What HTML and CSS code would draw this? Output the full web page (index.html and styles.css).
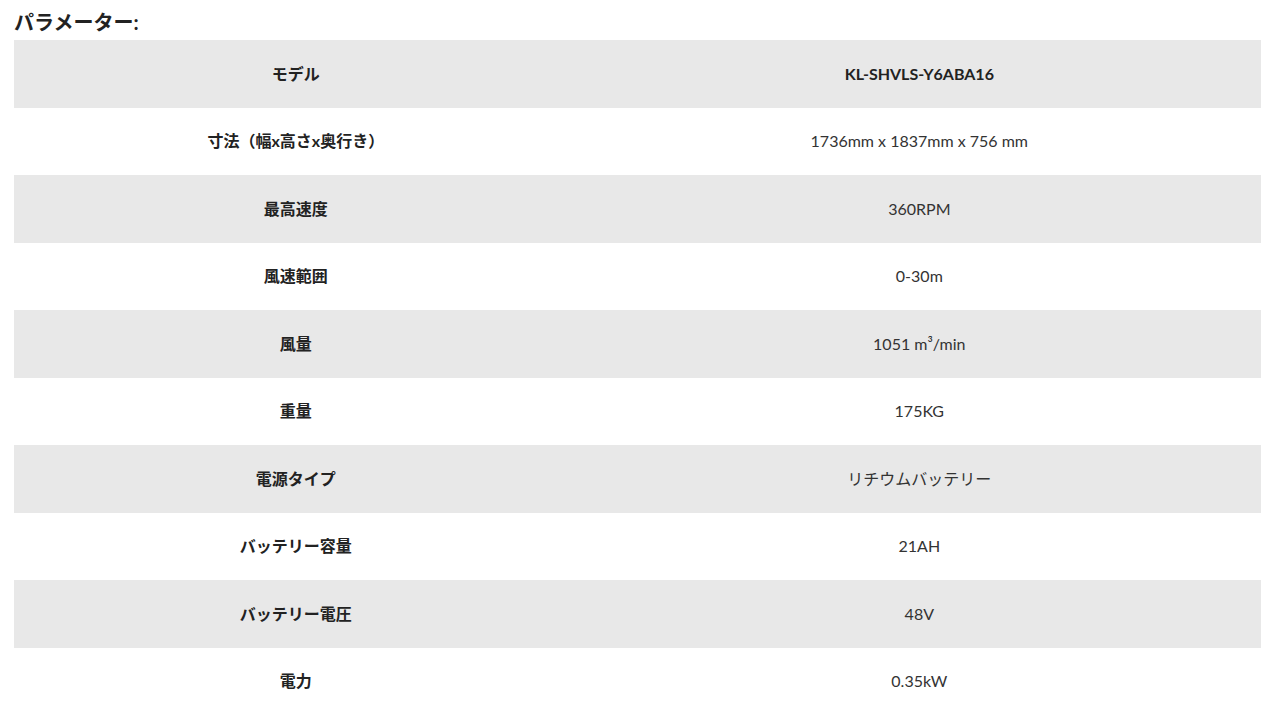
FILE: index.html
```html
<!DOCTYPE html>
<html lang="ja">
<head>
<meta charset="utf-8">
<link rel="stylesheet" href="styles.css">
</head>
<body>
<h3 class="title">パラメーター:</h3>
<table class="spec">
<tbody>
<tr><td class="k">モデル</td><td class="v strong">KL-SHVLS-Y6ABA16</td></tr>
<tr><td class="k">寸法（幅x高さx奥行き）</td><td class="v">1736mm x 1837mm x 756 mm</td></tr>
<tr><td class="k">最高速度</td><td class="v">360RPM</td></tr>
<tr><td class="k">風速範囲</td><td class="v">0-30m</td></tr>
<tr><td class="k">風量</td><td class="v">1051 m³/min</td></tr>
<tr><td class="k">重量</td><td class="v">175KG</td></tr>
<tr><td class="k">電源タイプ</td><td class="v">リチウムバッテリー</td></tr>
<tr><td class="k">バッテリー容量</td><td class="v">21AH</td></tr>
<tr><td class="k">バッテリー電圧</td><td class="v">48V</td></tr>
<tr><td class="k">電力</td><td class="v">0.35kW</td></tr>
</tbody>
</table>
</body>
</html>
```
FILE: styles.css
```css
html, body {
  margin: 0;
  padding: 0;
  background: #fff;
}
body {
  padding: 0 19px 0 14px;
  font-family: "Lato", "Noto Sans CJK JP", sans-serif;
  color: #333;
}
.title {
  margin: 0;
  padding-top: 10px;
  height: 40px;
  box-sizing: border-box;
  font-size: 20px;
  line-height: 24px;
  font-weight: 700;
  color: #222;
}
.spec {
  width: 100%;
  border-collapse: collapse;
  table-layout: fixed;
}
.spec tr {
  height: 67.5px;
}
.spec tr:nth-child(odd) {
  background: #e8e8e8;
}
.spec td {
  padding: 0;
  text-align: center;
  vertical-align: middle;
  font-size: 16px;
  line-height: 20px;
}
.spec td.k {
  width: 45.2%;
  font-weight: 700;
  color: #222;
}
.spec td.v {
  color: #333;
}
.spec td.strong {
  font-weight: 700;
  color: #222;
}
```
